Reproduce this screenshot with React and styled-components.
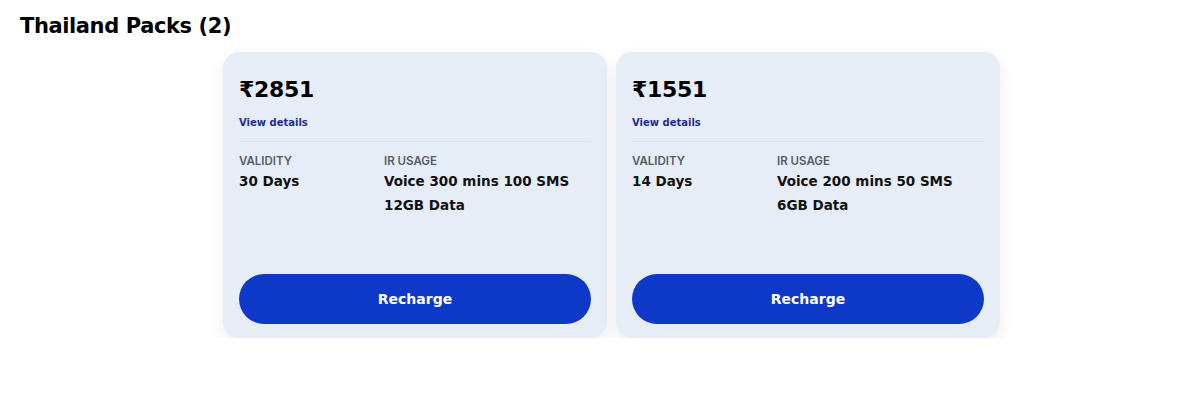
import React from "react";
import styled, { createGlobalStyle } from "styled-components";

const GlobalStyle = createGlobalStyle`
  body {
    margin: 0;
    background: #ffffff;
    font-family: "DejaVu Sans", "Liberation Sans", sans-serif;
    color: #000;
  }
`;

const packs = [
  { price: "2851", validity: "30 Days", usage: ["Voice 300 mins 100 SMS", "12GB Data"] },
  { price: "1551", validity: "14 Days", usage: ["Voice 200 mins 50 SMS", "6GB Data"] },
];

const App = () => {
  return (
    <Page>
      <GlobalStyle />
      <Heading>Thailand Packs ({packs.length})</Heading>
      <CardRow>
        {packs.map((pack) => (
          <Card key={pack.price}>
            <Price>₹{pack.price}</Price>
            <DetailsLink href="#">View details</DetailsLink>
            <Divider />
            <InfoGrid>
              <InfoCol>
                <Label>VALIDITY</Label>
                <Value>{pack.validity}</Value>
              </InfoCol>
              <InfoCol>
                <Label>IR USAGE</Label>
                {pack.usage.map((line) => (
                  <Value key={line}>{line}</Value>
                ))}
              </InfoCol>
            </InfoGrid>
            <RechargeButton>Recharge</RechargeButton>
          </Card>
        ))}
      </CardRow>
    </Page>
  );
};

const Page = styled.div`
  padding: 12px 0 0 20px;
`;

const Heading = styled.h2`
  margin: 0;
  font-size: 21px;
  font-weight: 700;
  line-height: 28px;
  letter-spacing: -0.4px;
`;

const CardRow = styled.div`
  display: flex;
  gap: 9px;
  margin: 12px 0 0 203px;
`;

const Card = styled.div`
  width: 384px;
  height: 286px;
  box-sizing: border-box;
  padding: 23px 16px 14px 16px;
  display: flex;
  flex-direction: column;
  background: #e7edf7;
  border-radius: 16px;
  box-shadow: 0 6px 16px rgba(30, 40, 80, 0.08);
`;

const Price = styled.div`
  font-size: 22px;
  font-weight: 700;
  line-height: 30px;
  letter-spacing: -0.3px;
`;

const DetailsLink = styled.a`
  margin-top: 11px;
  font-size: 10px;
  font-weight: 700;
  line-height: 14px;
  color: #1f2f8f;
  text-decoration: none;
`;

const Divider = styled.div`
  height: 1px;
  margin: 11px 0 12px;
  background: #dde3ee;
`;

const InfoGrid = styled.div`
  display: grid;
  grid-template-columns: 145px 1fr;
`;

const InfoCol = styled.div`
  display: flex;
  flex-direction: column;
`;

const Label = styled.div`
  font-family: Inter, "DejaVu Sans", sans-serif;
  font-size: 11.5px;
  font-weight: 600;
  line-height: 14px;
  color: #555b66;
  margin-bottom: 1px;
`;

const Value = styled.div`
  font-size: 13.5px;
  font-weight: 700;
  line-height: 24px;
  color: #111;
`;

const RechargeButton = styled.button`
  margin-top: auto;
  height: 50px;
  width: 100%;
  border: none;
  border-radius: 25px;
  background: #0d38c8;
  color: #fff;
  font-family: inherit;
  font-size: 14px;
  font-weight: 700;
  cursor: pointer;
`;

export default App;
